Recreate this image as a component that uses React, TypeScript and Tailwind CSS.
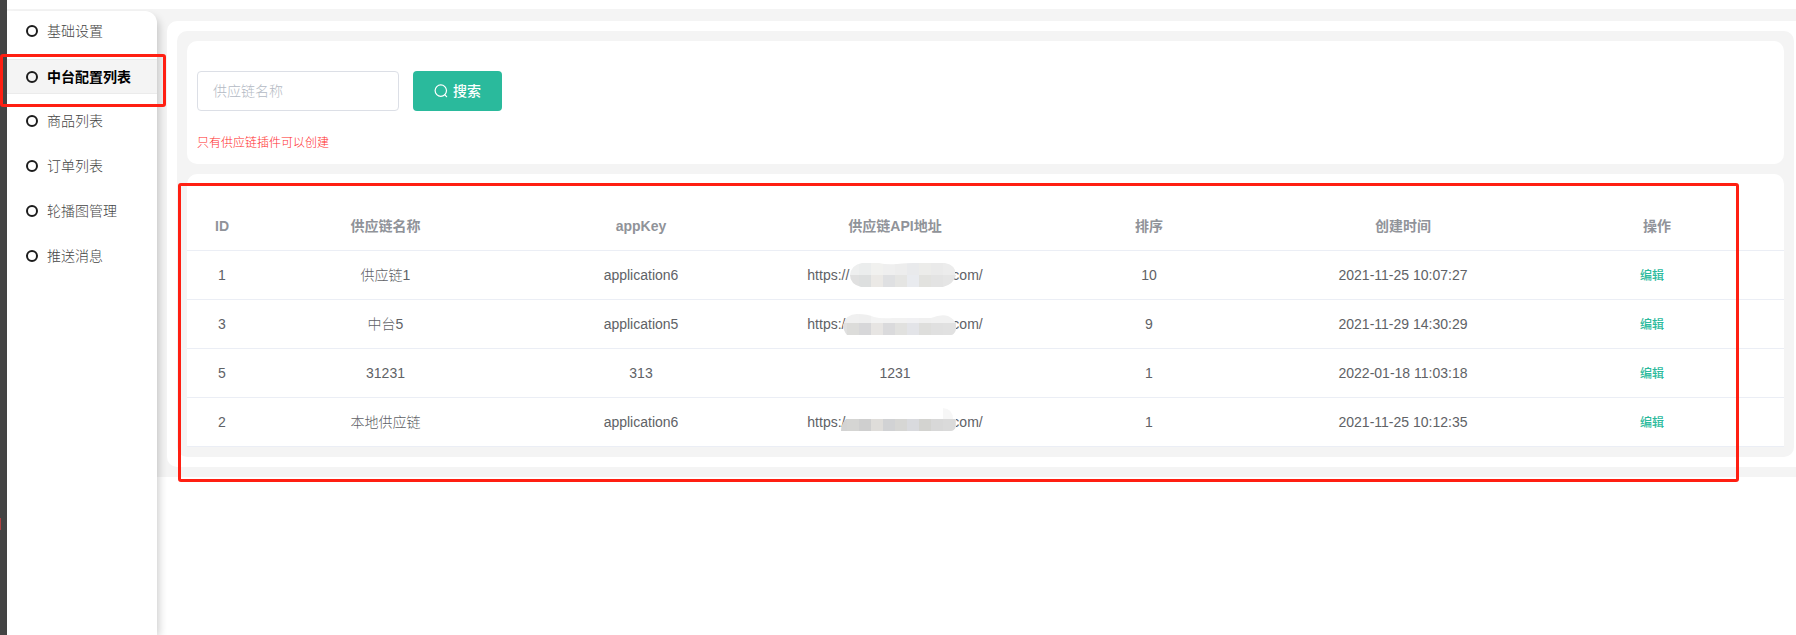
import { useState } from 'react'

interface Supplier {
  id: number
  name: string
  appKey: string
  url: string
  mask?: keyof typeof masks
  sort: number
  createdAt: string
}

const menu = ['基础设置', '中台配置列表', '商品列表', '订单列表', '轮播图管理', '推送消息']

const columns = [
  { title: 'ID', width: 'w-[70px]' },
  { title: '供应链名称', width: 'w-[257px]' },
  { title: 'appKey', width: '' },
  { title: '供应链API地址', width: '' },
  { title: '排序', width: '' },
  { title: '创建时间', width: '' },
  { title: '操作', width: '' },
]

const suppliers: Supplier[] = [
  { id: 1, name: '供应链1', appKey: 'application6', url: 'https://', mask: 'pill', sort: 10, createdAt: '2021-11-25 10:07:27' },
  { id: 3, name: '中台5', appKey: 'application5', url: 'https://', mask: 'wave', sort: 9, createdAt: '2021-11-29 14:30:29' },
  { id: 5, name: '31231', appKey: '313', url: '1231', sort: 1, createdAt: '2022-01-18 11:03:18' },
  { id: 2, name: '本地供应链', appKey: 'application6', url: 'https://', mask: 'bar', sort: 1, createdAt: '2021-11-25 10:12:35' },
]

// outline of each smear, plus where its tile rows start and how they are shaded
const masks = {
  pill: {
    path: 'M21 2H38Q45 4 56 3T72 2H104Q115 4 115 14Q113 23 102 26H20Q9 23 9 14Q10 4 21 2Z',
    rows: [
      { y: 2, fills: ['#ececec', '#eeefef', '#ebeded', '#f1f1ef', '#efefef', '#ededed', '#e9eaec', '#ececea', '#eaeaea', '#ececec'] },
      { y: 14, fills: ['#e3e3e3', '#e0e0e0', '#dddfdf', '#ebe9e6', '#dfe0e2', '#e5e5e3', '#e9ebef', '#e2e2df', '#e3e3e3', '#e5e5e5'] },
    ],
  },
  wave: {
    path: 'M2 15Q5 4 16 4Q27 4 33 7Q40 9 52 8H90Q100 4 107 6Q115 10 115 15V20Q113 25 110 25H6Q2 20 2 15Z',
    rows: [
      { y: 1, fills: ['#eeeeee', '#f0f0f0', '#efefef', '#f3f3f3', '#f2f2f2', '#f2f2f2', '#f1f1f3', '#f0f0f0', '#f1f1f1', '#f1f1f1'] },
      { y: 13, fills: ['#e0e0e0', '#dcdcda', '#d7d7d9', '#e7e5e3', '#dadadc', '#e1e1df', '#e3e4e8', '#dededc', '#e0e0e0', '#e1e1e1'] },
    ],
  },
  bar: {
    path: 'M5 0H102Q112 1 112 11H115V19Q113 23 110 23H0Q0 16 5 11Z',
    rows: [
      { y: -1, fills: ['#ffffff', '#ffffff', '#ffffff', '#ffffff', '#ffffff', '#ffffff', '#ffffff', '#ffffff', '#ffffff', '#f7f7f7'] },
      { y: 11, fills: ['#d3d3d3', '#d5d5d3', '#cfcfcf', '#dfddda', '#d1d2d4', '#d6d6d4', '#d9dade', '#d3d3d0', '#d8d8d8', '#dadada'] },
    ],
  },
}

function Mask({ kind }: { kind: keyof typeof masks }) {
  const { path, rows } = masks[kind]
  return (
    <svg className="absolute top-1/2 -left-2 h-7 w-[117px] -translate-y-1/2" viewBox="0 0 117 28" aria-hidden="true">
      <clipPath id={`mask-${kind}`}>
        <path d={path} />
      </clipPath>
      <g clipPath={`url(#mask-${kind})`} shapeRendering="crispEdges">
        {rows.map((row) =>
          row.fills.map((fill, i) => (
            <rect key={`${row.y}-${i}`} x={i * 12 - 6} y={row.y} width={12} height={12} fill={fill} />
          ))
        )}
        <rect x={114} y={rows[1].y} width={3} height={12} fill="#e2e2e2" />
      </g>
    </svg>
  )
}

function Sidebar({ active, onSelect }: { active: string; onSelect: (item: string) => void }) {
  return (
    <aside className="relative w-[150px] shrink-0 rounded-tr-xl bg-white pt-[3px] shadow-[4px_4px_8px_-2px_rgba(0,0,0,0.2)]">
      <nav className="flex flex-col gap-2.5">
        {menu.map((item) => (
          <a
            key={item}
            href="#"
            onClick={() => onSelect(item)}
            className={
              item === active
                ? 'flex h-[35px] items-center gap-[9px] border-y border-[#ebebeb] bg-[#f4f4f4] pl-[19px] text-sm font-bold text-black'
                : 'flex h-[35px] items-center gap-[9px] pb-0.5 pl-[19px] text-sm font-light text-[#444]'
            }
          >
            <span className="h-3 w-3 rounded-full border-2 border-[#1c1c1c]" />
            {item}
          </a>
        ))}
      </nav>
    </aside>
  )
}

function SearchPanel() {
  const [keyword, setKeyword] = useState('')

  return (
    <section className="rounded-[10px] bg-white px-2.5 pt-[30px] pb-[11px]">
      <form className="flex gap-3.5" onSubmit={(e) => e.preventDefault()}>
        <input
          value={keyword}
          onChange={(e) => setKeyword(e.target.value)}
          aria-label="供应链名称"
          placeholder="供应链名称"
          className="h-10 w-[202px] rounded border border-[#dcdfe6] px-[15px] text-sm font-light text-[#606266] outline-none placeholder:text-[#b4bac4]"
        />
        <button className="flex h-10 w-[89px] items-center justify-center gap-[5px] rounded bg-[#2aba9c] text-sm font-medium text-white">
          <svg className="h-3.5 w-3.5" viewBox="0 0 14 14" fill="none" stroke="currentColor" strokeWidth="1.2" strokeLinecap="round" aria-hidden="true">
            <circle cx="6.8" cy="6.6" r="5.7" />
            <path d="M10.9 10.8 12.6 12.7" />
          </svg>
          搜索
        </button>
      </form>
      <p className="mt-[22px] text-xs leading-5 font-light text-[#ff2b2b]">只有供应链插件可以创建</p>
    </section>
  )
}

function SupplierTable() {
  return (
    <section className="relative rounded-t-[10px] bg-white pt-7">
      <table className="w-full table-fixed border-separate border-spacing-0 text-center text-sm text-[#606266] [&_td]:h-[49px] [&_td]:border-b [&_td]:border-[#ebeef5] [&_td]:p-0">
        <thead>
          <tr className="text-[#909399]">
            {columns.map(({ title, width }) => (
              <th key={title} className={`h-[49px] border-b border-[#ebeef5] p-0 font-bold ${width}`}>
                {title}
              </th>
            ))}
          </tr>
        </thead>
        <tbody>
          {suppliers.map((s) => (
            <tr key={s.id}>
              <td>{s.id}</td>
              <td className="font-light">{s.name}</td>
              <td>{s.appKey}</td>
              <td>
                {s.mask ? (
                  <span className="flex justify-center">
                    {s.url}
                    <span className="relative w-[103px]">
                      <Mask kind={s.mask} />
                    </span>
                    com/
                  </span>
                ) : (
                  s.url
                )}
              </td>
              <td>{s.sort}</td>
              <td>{s.createdAt}</td>
              <td>
                <button className="mr-2.5 text-xs font-medium text-[#2aba9c]">编辑</button>
              </td>
            </tr>
          ))}
        </tbody>
      </table>
      <div className="pointer-events-none absolute top-[9px] right-[45px] -bottom-[35px] -left-[9px] rounded-[3px] border-3 border-[#ff1f12]" />
    </section>
  )
}

export default function App() {
  const [active, setActive] = useState('中台配置列表')

  return (
    <div className="relative flex min-h-screen bg-white font-['Liberation_Sans','Noto_Sans_CJK_SC',sans-serif]">
      <div className="relative w-[7px] shrink-0 bg-[#444]">
        <div className="absolute bottom-[105px] left-0 h-3 w-px bg-[#b04040]" />
      </div>
      <div className="relative mt-[9px] flex min-w-0 flex-1">
        <div className="absolute inset-x-0 top-0 h-[60px] bg-[#f4f4f4]" />
        <div className="relative z-10 mt-0.5 flex">
          <Sidebar active={active} onSelect={setActive} />
        </div>
        <main className="relative min-w-0 flex-1">
          <div className="bg-[#f4f4f4] py-2.5 pt-3 pl-2.5">
            <div className="rounded-l-[10px] bg-white py-2.5 pr-0.5 pl-2.5">
              <div className="flex flex-col gap-2.5 rounded-[10px] bg-[#f4f4f4] p-2.5">
                <SearchPanel />
                <SupplierTable />
              </div>
            </div>
          </div>
        </main>
      </div>
      <div className="pointer-events-none absolute top-[54px] left-0 z-20 h-[53px] w-[166px] rounded-[3px] border-3 border-[#ff1f12]" />
    </div>
  )
}
